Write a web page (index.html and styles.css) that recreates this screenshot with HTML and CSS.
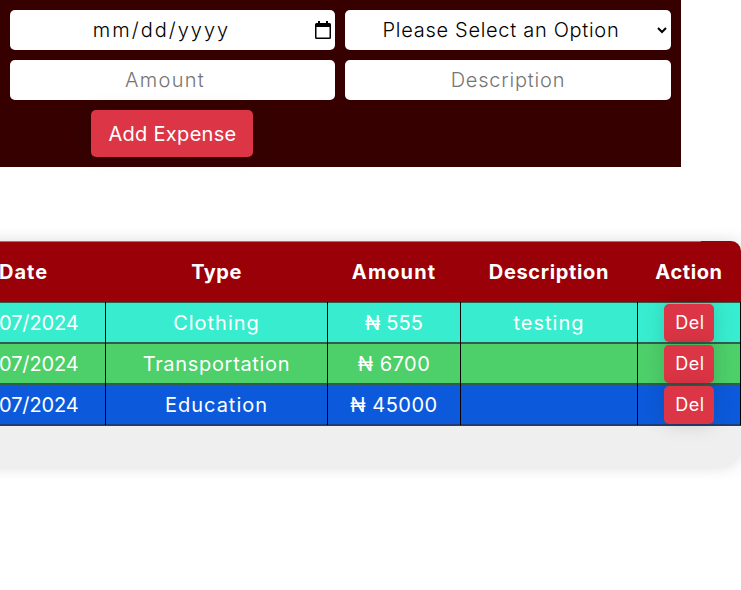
FILE: index.html
```html
<!DOCTYPE html>
<html lang="en">
<head>
<meta charset="utf-8">
<title>Expenses</title>
<link rel="stylesheet" href="styles.css">
</head>
<body>
<form class="expense-form">
  <div class="field date"><span class="date-text">mm/dd/yyyy</span>
    <svg class="calendar" width="16" height="18" viewBox="0 0 16 18"><path d="M3 0h2v2h6V0h2v2h1.500q1.500 0 1.500 1.500v13q0 1.500-1.500 1.500h-13Q0 18 0 16.500v-13Q0 2 1.500 2H3zM1.500 6v10.500h13V6z" fill="#000" fill-rule="evenodd"/></svg>
  </div>
  <div class="field select"><span>Please Select an Option</span>
    <svg class="chevron" width="10" height="7" viewBox="0 0 10 7"><path d="M1 1l4 4 4-4" fill="none" stroke="#000" stroke-width="2"/></svg>
  </div>
  <input class="field amount" placeholder="Amount">
  <input class="field description" placeholder="Description">
  <button class="add" type="button">Add Expense</button>
</form>
<section class="expenses">
  <div class="row head">
    <div class="cell date-col"><span class="t-date">Date</span></div>
    <div class="cell"><span class="t-type">Type</span></div>
    <div class="cell"><span class="t-amount">Amount</span></div>
    <div class="cell"><span class="t-desc">Description</span></div>
    <div class="cell"><span class="t-action">Action</span></div>
  </div>
  <div class="row clothing">
    <div class="cell date-col">07/2024</div>
    <div class="cell wide">Clothing</div>
    <div class="cell short">₦ 555</div>
    <div class="cell wide">testing</div>
    <div class="cell"><button class="del" type="button">Del</button></div>
  </div>
  <div class="row transport">
    <div class="cell date-col">07/2024</div>
    <div class="cell mid">Transportation</div>
    <div class="cell figure">₦ 6700</div>
    <div class="cell"></div>
    <div class="cell"><button class="del" type="button">Del</button></div>
  </div>
  <div class="row education">
    <div class="cell date-col">07/2024</div>
    <div class="cell wide">Education</div>
    <div class="cell figure">₦ 45000</div>
    <div class="cell"></div>
    <div class="cell"><button class="del" type="button">Del</button></div>
  </div>
</section>
</body>
</html>
```
FILE: styles.css
```css
* { box-sizing: border-box; }
body {
  margin: 0;
  min-height: 590px;
  background: #fff;
  font: 20px/30px Inter, "Open Sans", sans-serif;
  overflow: hidden;
}
.expense-form {
  width: 681px;
  height: 167px;
  padding: 10px;
  background: #360000;
  display: grid;
  grid-template-columns: 325px 326px;
  grid-template-rows: 40px 40px 47px;
  gap: 10px;
}
.field {
  width: 100%;
  height: 40px;
  border: 0;
  border-radius: 5px;
  background: #fff;
  color: #000;
  font: 300 20px/40px Inter, "Open Sans", sans-serif;
  text-align: center;
  outline: 0;
}
.field::placeholder { color: #757575; opacity: 1; }
.date, .select { display: flex; align-items: center; }
.date span, .select span { flex: 1; }
.date { padding-right: 4px; }
.date-text { letter-spacing: 2px; padding-right: 2px; }
.calendar { margin-top: -1px; }
.select { padding-right: 4px; letter-spacing: .7px; }
.amount { padding: 0 15px 0 0; letter-spacing: 1.3px; }
.description { padding: 0; letter-spacing: .8px; }
.add {
  width: 162px;
  height: 47px;
  margin-right: 2px;
  justify-self: center;
  border: 0;
  border-radius: 5px;
  padding: 1px 0 0 2px;
  background: #dc3545;
  color: #fff;
  font: 400 20px/46px Inter, sans-serif;
  letter-spacing: .3px;
  box-shadow: 0 0 20px rgba(0, 0, 0, .1);
}
.expenses {
  width: 781px;
  height: 226px;
  margin-top: 74px;
  margin-left: -40px;
  padding-left: 40px;
  border-radius: 0 10px 20px 0;
  background: #efefef;
  box-shadow: 0 0 16px rgba(0, 0, 0, .14);
}
.row {
  display: grid;
  grid-template-columns: 106px 222px 133px 177px 103px;
  height: 41px;
  color: #fff;
  border-top: 1px solid #325c4c;
  border-bottom: 1px solid #325c4c;
}
.cell {
  display: flex;
  align-items: center;
  justify-content: center;
  margin: -1px 0;
  border-right: 1px solid #000;
  white-space: nowrap;
}
.date-col { justify-content: flex-start; text-indent: -1px; letter-spacing: -.1px; }
.head {
  height: 61px;
  background: linear-gradient(#b86a70, #b86a70) 0 0 / 701px 1px no-repeat #9a0008;
  border-top: 0;
  border-bottom-color: #4a241c;
  border-radius: 0 10px 0 0;
  font-weight: 700;
}
.head .cell { border-right-color: transparent; padding-top: 2px; }
.t-date { letter-spacing: 1px; }
.t-type { letter-spacing: .5px; }
.t-amount { letter-spacing: 1.1px; }
.t-desc { letter-spacing: .65px; }
.t-action { letter-spacing: .6px; }
.clothing { background: #38edcf; }
.transport { background: #4dcf6a; border-color: #306040; }
.education { background: #0c5adb; height: 42px; border-bottom: 2px solid #203c70; }
.wide { letter-spacing: 1px; }
.mid { letter-spacing: .68px; }
.short { letter-spacing: .1px; }
.figure { letter-spacing: .5px; }
.del {
  width: 50px;
  height: 38px;
  padding: 0 0 0 2px;
  border: 0;
  border-radius: 5px;
  background: #dc3545;
  color: #fff;
  font: 400 18px/38px Inter, sans-serif;
  letter-spacing: .5px;
  box-shadow: 0 0 20px rgba(0, 0, 0, .15);
}
```
